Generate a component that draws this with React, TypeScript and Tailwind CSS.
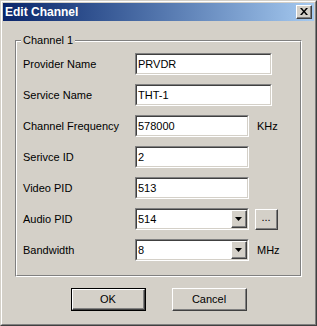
/**
 * "Edit Channel" dialog in the Windows classic look.
 */

const FONT = "font-['Liberation_Sans',Arial,sans-serif]";

function Sunken({ width, children }: { width: number; children: React.ReactNode }) {
  return (
    <div
      className="h-[22px] border-t border-l border-[#808080] border-b border-r border-b-white border-r-white"
      style={{ width }}
    >
      <div className="flex h-full border-t border-l border-[#404040] border-b border-r border-b-[#d4d0c8] border-r-[#d4d0c8] bg-white">
        {children}
      </div>
    </div>
  );
}

function Raised({ className = "", children }: { className?: string; children?: React.ReactNode }) {
  return (
    <div className={`border-t border-l border-white border-b border-r border-b-[#404040] border-r-[#404040] bg-[#d4d0c8] ${className}`}>
      <div className="flex h-full w-full items-center justify-center border-b border-r border-[#808080]">
        {children}
      </div>
    </div>
  );
}

function TextBox({ value, width }: { value: string; width: number }) {
  return (
    <Sunken width={width}>
      <span className="pl-[1px] text-[11px] leading-[18px] text-black">{value}</span>
    </Sunken>
  );
}

function ComboBox({ value, width }: { value: string; width: number }) {
  return (
    <Sunken width={width}>
      <span className="flex-1 pl-[1px] text-[11px] leading-[18px] text-black">{value}</span>
      <Raised className="h-full w-[16px]">
        <svg width="7" height="4" viewBox="0 0 7 4">
          <path d="M0 0h7L3.5 4z" fill="#000" />
        </svg>
      </Raised>
    </Sunken>
  );
}

type Row = {
  label: string;
  value: string;
  width: number;
  combo?: boolean;
  unit?: string;
  more?: boolean;
};

const rows: Row[] = [
  { label: "Provider Name", value: "PRVDR", width: 137 },
  { label: "Service Name", value: "THT-1", width: 137 },
  { label: "Channel Frequency", value: "578000", width: 114, unit: "KHz" },
  { label: "Serivce ID", value: "2", width: 114 },
  { label: "Video PID", value: "513", width: 114 },
  { label: "Audio PID", value: "514", width: 114, combo: true, more: true },
  { label: "Bandwidth", value: "8", width: 114, combo: true, unit: "MHz" },
];

export default function App() {
  return (
    <div className={`h-[326px] w-[317px] ${FONT} select-none`}>
      {/* window frame */}
      <div className="h-full w-full border-t border-l border-[#d4d0c8] border-b border-r border-b-[#404040] border-r-[#404040]">
        <div className="flex h-full w-full flex-col border-t border-l border-white border-b border-r border-b-[#808080] border-r-[#808080] bg-[#d4d0c8] p-[1px]">
          {/* title bar */}
          <div className="flex h-[18px] items-center justify-between bg-gradient-to-r from-[#0a246a] to-[#a6caf0] pl-[2px] pr-[2px]">
            <span className="text-[12px] font-bold leading-none text-white">Edit Channel</span>
            <Raised className="h-[14px] w-[16px]">
              <svg width="8" height="7" viewBox="0 0 8 7">
                <path d="M0 0h2l2 2.5L6 0h2L5 3.5 8 7H6L4 4.5 2 7H0l3-3.5z" fill="#000" />
              </svg>
            </Raised>
          </div>

          {/* group box */}
          <div className="relative ml-[12px] mr-[12px] mt-[19px] border-t border-l border-[#808080] border-b border-r border-b-white border-r-white">
            <span className="absolute left-[5px] top-[-7px] bg-[#d4d0c8] px-[2px] text-[11px] leading-[13px] text-black">
              Channel 1
            </span>
            <div className="flex flex-col gap-[9px] border-t border-l border-white border-b border-r border-b-[#808080] border-r-[#808080] pb-[14px] pl-[6px] pt-[11px]">
              {rows.map((r) => (
                <div key={r.label} className="flex h-[22px] items-center">
                  <span className="w-[112px] text-[11px] text-black">{r.label}</span>
                  {r.combo ? (
                    <ComboBox value={r.value} width={r.width} />
                  ) : (
                    <TextBox value={r.value} width={r.width} />
                  )}
                  {r.unit && <span className="ml-[8px] text-[11px] text-black">{r.unit}</span>}
                  {r.more && (
                    <Raised className="ml-[6px] h-[21px] w-[23px]">
                      <span className="pb-[3px] text-[11px] leading-none text-black">...</span>
                    </Raised>
                  )}
                </div>
              ))}
            </div>
          </div>

          {/* buttons */}
          <div className="mt-[11px] flex gap-[26px] pl-[68px]">
            <div className="h-[23px] w-[75px] border border-black">
              <Raised className="h-full w-full">
                <span className="text-[11px] text-black">OK</span>
              </Raised>
            </div>
            <Raised className="h-[23px] w-[75px]">
              <span className="text-[11px] text-black">Cancel</span>
            </Raised>
          </div>
        </div>
      </div>
    </div>
  );
}
